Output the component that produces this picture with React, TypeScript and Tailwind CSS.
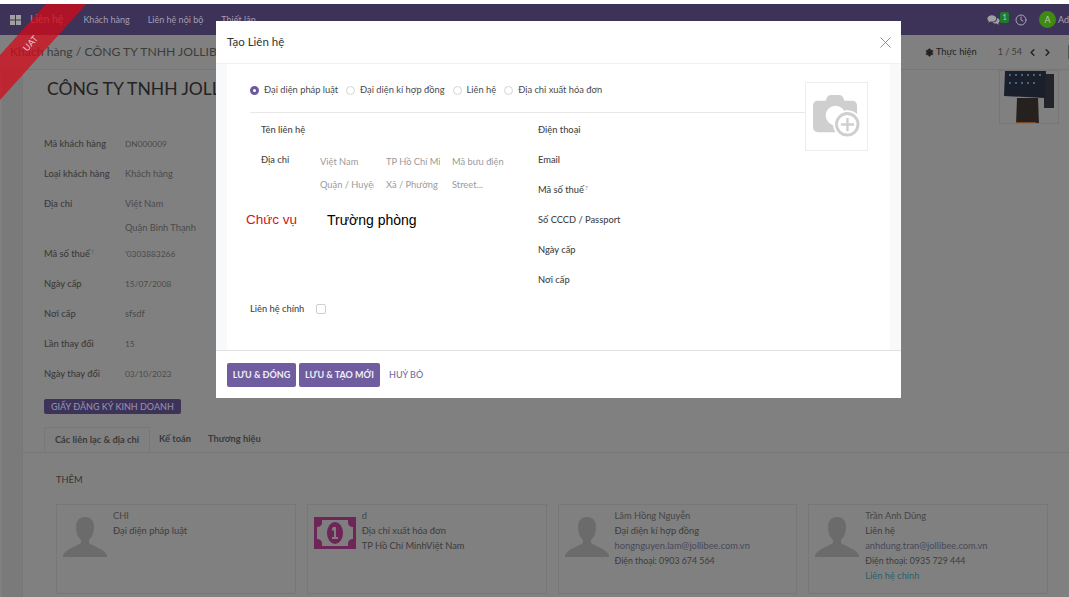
import { X, ChevronLeft, ChevronRight, Clock, Settings } from "lucide-react";

const font = "font-['Lato','Open_Sans',sans-serif]";

const details = [
  { label: "Mã khách hàng", value: "DN000009", h: "h-[30px]", num: true },
  { label: "Loại khách hàng", value: "Khách hàng", h: "h-[30px]" },
  { label: "Địa chỉ", value: "Việt Nam", extra: "Quận Bình Thạnh", h: "h-[50px]" },
  { label: "Mã số thuế", value: "'0303883266", sup: true, h: "h-[30px]", num: true },
  { label: "Ngày cấp", value: "15/07/2008", h: "h-[30px]", num: true },
  { label: "Nơi cấp", value: "sfsdf", h: "h-[30px]" },
  { label: "Lần thay đổi", value: "15", h: "h-[30px]", num: true },
  { label: "Ngày thay đổi", value: "03/10/2023", h: "h-[30px]", num: true },
];

const contacts = [
  { name: "CHI", lines: ["Đại diện pháp luật"] },
  { name: "d", lines: ["Địa chỉ xuất hóa đơn", "TP Hồ Chí MinhViệt Nam"], bill: true },
  { name: "Lâm Hồng Nguyễn", lines: ["Đại diện kí hợp đồng", "hongnguyen.lam@jollibee.com.vn", "Điện thoại: 0903 674 564"] },
  { name: "Trần Anh Dũng", lines: ["Liên hệ", "anhdung.tran@jollibee.com.vn", "Điện thoại: 0935 729 444"], main: true },
];

function lineClass(l: string) {
  if (l.includes("@")) return "text-[#484858]";
  if (l.startsWith("Điện thoại")) return "text-[#3c3c3c] text-[8.8px]";
  return "text-[#3c3c3c]";
}

function Person() {
  return (
    <svg viewBox="0 0 44 40" className="w-[44px] h-[40px] shrink-0 mt-[10px]">
      <path fill="#6b6b6b" d="M22 0c-6 0-9 4-9 10 0 6 2 10 5 13v3C14 29 3 32 0 38c-.5 1-.5 2 0 2h44c.5 0 .5-1 0-2-3-6-14-9-18-12v-3c3-3 5-7 5-13 0-6-3-10-9-10z" />
    </svg>
  );
}

function Bill() {
  return (
    <svg viewBox="0 0 42 32" className="w-[42px] h-[32px] shrink-0 mt-[10px]">
      <rect width="42" height="32" fill="#6e2558" />
      <path fill="#7f7f7f" d="M8 3h26v3c0 2 2 4 5 4v12c-3 0-5 2-5 4v3H8v-3c0-2-2-4-5-4V10c3 0 5-2 5-4z" />
      <ellipse cx="21" cy="16" rx="8" ry="11" fill="#6e2558" />
      <path fill="#7f7f7f" d="M19 10h3v10h2v2h-6v-2h2v-7l-2 1v-2z" />
    </svg>
  );
}

function Chat() {
  return (
    <svg viewBox="0 0 16 14" className="w-[13px] h-[12px]">
      <path fill="#a0a0a0" d="M6 1c3 0 5.500 1.700 5.500 4S9 9 6 9c-.7 0-1.300-.1-1.900-.2L1.500 10.500l.8-2.400C1 7.300.5 6.200.5 5 .5 2.700 3 1 6 1z" />
      <path fill="#a0a0a0" d="M12.500 4.500c1.800.5 3 1.800 3 3.300 0 1.100-.6 2-1.600 2.700l.6 2.300-2.600-1.600c-.4.100-.8.100-1.200.1-1.600 0-3-.6-3.800-1.500 3.200.1 6-1.800 5.600-5.300z" />
    </svg>
  );
}

function AppsIcon() {
  return (
    <svg viewBox="0 0 11 10" className="w-[11px] h-[10px]">
      <rect x="0" y="0" width="5" height="4.500" fill="#a0a0a0" />
      <rect x="6" y="0" width="5" height="4.500" fill="#a0a0a0" />
      <rect x="0" y="5.500" width="5" height="4.500" fill="#a0a0a0" />
      <rect x="6" y="5.500" width="5" height="4.500" fill="#a0a0a0" />
    </svg>
  );
}

function Device() {
  return (
    <svg viewBox="0 0 58 54" className="w-[58px] h-[54px]">
      <rect x="44" y="3" width="10" height="34" fill="#23242a" />
      <path fill="#1a1f2c" d="M5 0h41l-1 27-41-2z" />
      <g fill="#4a6480">
        <rect x="9" y="3" width="2" height="2" />
        <rect x="15" y="3" width="2" height="2" />
        <rect x="21" y="3" width="2" height="2" />
        <rect x="27" y="3" width="2" height="2" />
        <rect x="33" y="3" width="2" height="2" />
        <rect x="39" y="3" width="2" height="2" />
        <rect x="9" y="11" width="2" height="2" />
        <rect x="15" y="11" width="2" height="2" />
        <rect x="21" y="11" width="2" height="2" />
        <rect x="27" y="11" width="2" height="2" />
        <rect x="33" y="11" width="2" height="2" />
      </g>
      <path fill="#26211f" d="M17 27h21l1 27H16z" />
      <rect x="16" y="51" width="20" height="3" fill="#7a4a22" />
    </svg>
  );
}

function Radio({ on, label }: { on?: boolean; label: string }) {
  return (
    <span className="flex items-center gap-[5px]">
      {on ? (
        <span className="w-[9px] h-[9px] rounded-full border-[3px] border-[#6c5a9e] bg-white" />
      ) : (
        <span className="w-[9px] h-[9px] rounded-full border border-[#d5d5d5] bg-white" />
      )}
      <span>{label}</span>
    </span>
  );
}

function Placeholder({ children }: { children: string }) {
  return <span className="w-[54px] overflow-hidden whitespace-nowrap text-[#9a9a9a]">{children}</span>;
}

export default function App() {
  return (
    <div className={`relative w-[1069px] h-[597px] overflow-hidden bg-[#808080] text-[9.3px] text-[#2e2e2e] ${font}`}>
      <div className="relative z-10 h-[4px] bg-white" />

      {/* navbar */}
      <div className="h-[31px] bg-[#3d3358] flex items-center pl-[10px] text-[9px] text-[#a49eb4]">
        <AppsIcon />
        <span className="ml-[9px] text-[#c88088] text-[10.5px]">Liên hệ</span>
        <span className="ml-[20px]">Khách hàng</span>
        <span className="ml-[18px]">Liên hệ nội bộ</span>
        <span className="ml-[18px]">Thiết lập</span>
        <div className="ml-auto flex items-center text-[#a8a3b6]">
          <Chat />
          <span className="w-[9px] h-[11px] mb-[5px] bg-[#1f7a2d] text-[8px] leading-[11px] text-center text-[#b9c9b9] rounded-[2px]">1</span>
          <Clock className="w-[12px] h-[12px] ml-[6px] text-[#a8a3b6]" />
          <span className="w-[17px] h-[17px] ml-[12px] rounded-full bg-[#3f8a12] text-[9px] leading-[17px] text-center text-[#b7c9a8]">A</span>
          <span className="ml-[2px] w-[11px] overflow-hidden">Ad</span>
        </div>
      </div>

      {/* breadcrumb */}
      <div className="h-[35px] flex items-center border-b border-[#777777] pl-[10px]">
        <span className="text-[12.2px] text-[#3c3c3c] whitespace-nowrap">Khách hàng / CÔNG TY TNHH JOLLIBEE</span>
        <span className="ml-auto flex items-center gap-[2px] text-[#1f1f1f]">
          <Settings className="w-[9px] h-[9px] fill-[#222] text-[#222]" />
          Thực hiện
        </span>
        <span className="ml-[21px] text-[9px] text-[#3c3c3c]">1 / 54</span>
        <ChevronLeft className="ml-[5px] w-[11px] h-[11px] text-[#1f1f1f]" strokeWidth={3} />
        <ChevronRight className="ml-[4px] w-[11px] h-[11px] text-[#1f1f1f]" strokeWidth={3} />
        <span className="ml-[15px] w-[1px] h-[14px] bg-[#555555]" />
      </div>

      {/* sheet */}
      <div className="h-[527px] ml-[2px] bg-[#7a7a7a]">
        <div className="ml-[20px] h-full bg-[#808080] border-l border-[#777777]">
          <div className="flex justify-between items-start pl-[24px] pr-[10px]">
            <h1 className="mt-[7px] text-[17.5px] leading-[24px] text-[#232323] whitespace-nowrap">CÔNG TY TNHH JOLLIBEE</h1>
            <div className="w-[60px] h-[54px] border border-[#767676] overflow-hidden">
              <Device />
            </div>
          </div>

          <div className="mt-[12px] pl-[21px]">
            {details.map((d) => (
              <div key={d.label} className={`flex ${d.h}`}>
                <span className="w-[81px] leading-[16px] font-medium text-[#3a3a3a] whitespace-nowrap">
                  {d.label}
                  {d.sup && <sup className="text-[6px] text-[#3d5f78] ml-[1px]">?</sup>}
                </span>
                <span className={d.num ? "leading-[16px] text-[8.4px] text-[#4a4a4a]" : "leading-[16px] text-[#4a4a4a]"}>
                  {d.value}
                  {d.extra && <span className="block mt-[8px]">{d.extra}</span>}
                </span>
              </div>
            ))}
            <span className="inline-block mt-[3px] h-[15px] px-[7px] rounded-[2px] bg-[#3d3358] text-[9px] text-[#938eab] leading-[15px] font-medium">
              GIẤY ĐĂNG KÝ KINH DOANH
            </span>
          </div>

          {/* tabs */}
          <div className="mt-[14px] h-[25px] border-b border-[#777777] pl-[21px] flex items-end font-bold text-[#3a3a3a]">
            <span className="h-[25px] w-[106px] text-center leading-[24px] border border-b-0 border-[#777777] bg-[#808080]">Các liên lạc &amp; địa chỉ</span>
            <span className="h-[25px] ml-[9px] leading-[24px]">Kế toán</span>
            <span className="h-[25px] ml-[17px] leading-[24px]">Thương hiệu</span>
          </div>

          <div className="pt-[19px] pl-[33px] pr-[21px]">
            <span className="block leading-[16px] text-[#353535]">THÊM</span>
            <div className="mt-[16px] grid grid-cols-4 gap-x-[11px]">
              {contacts.map((c) => (
                <div key={c.name} className="h-[90px] border border-[#777777] pl-[6px] pt-[2px] flex gap-[6px]">
                  {c.bill ? <Bill /> : <Person />}
                  <div className="leading-[15px] pt-[1px] whitespace-nowrap">
                    <p className="text-[#454545]">{c.name}</p>
                    {c.lines.map((l) => (
                      <p key={l} className={lineClass(l)}>{l}</p>
                    ))}
                    {c.main && <p className="text-[#2b6168]">Liên hệ chính</p>}
                  </div>
                </div>
              ))}
            </div>
          </div>
        </div>
      </div>

      {/* ribbon */}
      <div className="absolute left-[-38px] top-[27px] w-[140px] h-[30px] -rotate-[48deg] bg-[#d40a18]/75 flex items-center justify-center text-[9px] text-[#e8c4c6]">
        <span className="mr-[4px]">UAT</span>
      </div>

      {/* modal */}
      <div className="absolute left-[216px] top-[21px] w-[685px] h-[377px] bg-white flex flex-col text-[#4a4a4a]">
        <div className="h-[43px] shrink-0 flex items-center justify-between pl-[11px] pr-[6px] border-b border-[#f2f2f2]">
          <span className="text-[11.5px] text-[#333333]">Tạo Liên hệ</span>
          <X className="w-[19px] h-[19px] text-[#777777]" strokeWidth={1} />
        </div>

        <div className="flex-1 px-[11px] bg-[#f8f9fb]">
          <div className="relative h-full bg-white pl-[23px]">
            <div className="h-[48px] flex items-end gap-[8px] pb-[15px] leading-[14px]">
              <Radio on label="Đại diện pháp luật" />
              <Radio label="Đại diện kí hợp đồng" />
              <Radio label="Liên hệ" />
              <Radio label="Địa chỉ xuất hóa đơn" />
            </div>
            <div className="h-px bg-[#e8e8e8] w-[555px]" />

            <div className="flex">
              <div className="w-[288px]">
                <p className="mt-[10px] ml-[11px] leading-[14px] font-medium text-[#444444]">Tên liên hệ</p>
                <div className="mt-[16px] ml-[11px] flex">
                  <span className="w-[59px] leading-[14px] font-medium text-[#444444]">Địa chỉ</span>
                  <div className="mt-[1px] grid grid-cols-[66px_66px_66px] gap-y-[8px] leading-[15px]">
                    <Placeholder>Việt Nam</Placeholder>
                    <Placeholder>TP Hồ Chí Mi</Placeholder>
                    <Placeholder>Mã bưu điện</Placeholder>
                    <Placeholder>Quận / Huyện</Placeholder>
                    <Placeholder>Xã / Phường</Placeholder>
                    <Placeholder>Street...</Placeholder>
                  </div>
                </div>
                <div className="mt-[19px] -ml-[4px] flex text-[13.5px] leading-[18px] font-['Liberation_Sans',sans-serif]">
                  <span className="w-[81px] text-[#d01616]">Chức vụ</span>
                  <span className="text-[14px] text-black">Trường phòng</span>
                </div>
                <div className="mt-[73px] flex items-center">
                  <span className="w-[66px] leading-[14px] font-medium text-[#444444]">Liên hệ chính</span>
                  <span className="w-[10px] h-[10px] rounded-[2px] border border-[#cfcfcf]" />
                </div>
              </div>
              <div className="mt-[10px] font-medium text-[#444444] leading-[14px]">
                <p>Điện thoại</p>
                <p className="mt-[16px]">Email</p>
                <p className="mt-[16px]">Mã số thuế<sup className="text-[6px] text-[#5f86a6] ml-[1px]">?</sup></p>
                <p className="mt-[16px]">Số CCCD / Passport</p>
                <p className="mt-[16px]">Ngày cấp</p>
                <p className="mt-[16px]">Nơi cấp</p>
              </div>
            </div>

            {/* image picker */}
            <div className="absolute left-[578px] top-[18px] w-[63px] h-[69px] border border-[#ededed] bg-white flex items-center justify-center">
              <svg viewBox="0 0 50 46" className="w-[49px] h-[45px]">
                <path fill="#cfcfcf" d="M15 4c1-2 2-3 4-3h9c2 0 3 1 4 3l1 3h8c3 0 5 2 5 5v22c0 3-2 5-5 5H6c-3 0-5-2-5-5V12c0-3 2-5 5-5h8z" />
                <circle cx="24" cy="22" r="10" fill="white" />
                <circle cx="36" cy="31" r="13.5" fill="#cfcfcf" stroke="white" strokeWidth="2" />
                <circle cx="36" cy="31" r="9.5" fill="white" />
                <path fill="#cfcfcf" d="M35 24.5h2.4V30H43v2.4h-5.6V38H35v-5.6h-5.5V30H35z" />
              </svg>
            </div>
          </div>
        </div>

        <div className="h-[48px] shrink-0 border-t border-[#e0e0e0] flex items-center pl-[11px] gap-[3px] font-bold text-[9px]">
          <span className="h-[24px] w-[69px] text-center leading-[24px] rounded-[2px] bg-[#6f5d9f] text-[#f0eef6]">LƯU &amp; ĐÓNG</span>
          <span className="h-[24px] w-[81px] text-center leading-[24px] rounded-[2px] bg-[#6f5d9f] text-[#f0eef6]">LƯU &amp; TẠO MỚI</span>
          <span className="ml-[6px] text-[#7a6d9d] font-medium">HUỶ BỎ</span>
        </div>
      </div>
    </div>
  );
}
